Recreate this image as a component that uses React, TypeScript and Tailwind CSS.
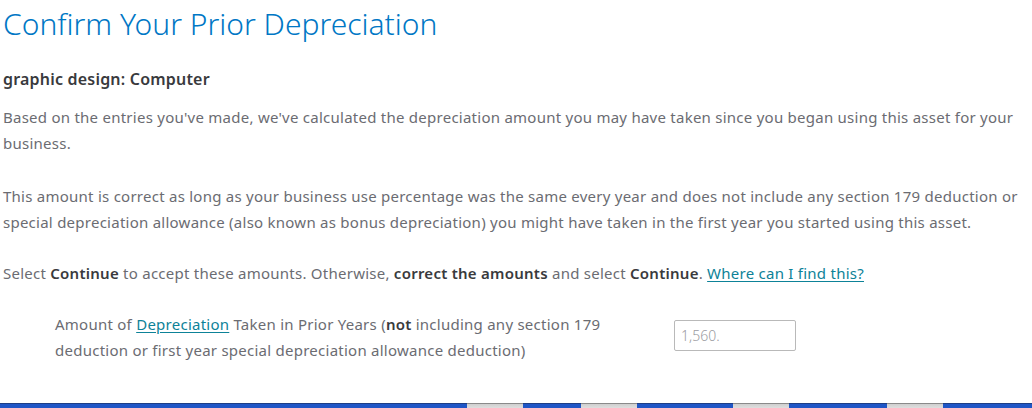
import React from "react"

const FONT = { fontFamily: '"Noto Sans", "Open Sans", Arial, sans-serif' }

// grey gaps in the blue strip along the bottom edge
const STRIP = [
  { w: 467, grey: false },
  { w: 56, grey: true },
  { w: 58, grey: false },
  { w: 56, grey: true },
  { w: 96, grey: false },
  { w: 56, grey: true },
  { w: 98, grey: false },
  { w: 56, grey: true },
  { w: 89, grey: false },
]

function Strip() {
  return (
    <div className="flex h-[5px] w-full">
      {STRIP.map((s, i) => (
        <div
          key={i}
          className={
            s.grey
              ? "h-full shrink-0 border-t border-[#8a8a8a] bg-gradient-to-b from-[#cfcfcf] to-[#dedede]"
              : "h-full shrink-0 border-t border-[#1d3f86] bg-[#1f56c6]"
          }
          style={{ width: s.w }}
        />
      ))}
    </div>
  )
}

export default function App() {
  return (
    <div className="flex h-[408px] w-[1032px] flex-col bg-white" style={FONT}>
      <div className="flex-1 pl-[3px] pr-[10px]">
        <h1 className="mt-[4px] text-[30px] font-light leading-[40px] text-[#0077c5]">
          Confirm Your Prior Depreciation
        </h1>
        <h2 className="mt-[25px] text-[16px] font-semibold leading-[20px] tracking-[0.2px] text-[#393a3d]">
          graphic design: Computer
        </h2>
        <div className="mt-[15px] text-[15px] leading-[26px] tracking-[0.25px] text-[#6b6c72]">
          <p>
            Based on the entries you've made, we've calculated the depreciation amount you may have
            taken since you began using this asset for your business.
          </p>
          <p className="mt-[27px]">
            This amount is correct as long as your business use percentage was the same every year
            and does not include any section 179 deduction or special depreciation allowance (also
            known as bonus depreciation) you might have taken in the first year you started using
            this asset.
          </p>
          <p className="mt-[25px]">
            Select <b className="font-semibold text-[#393a3d]">Continue</b> to accept these amounts.
            Otherwise, <b className="font-semibold text-[#393a3d]">correct the amounts</b> and
            select <b className="font-semibold text-[#393a3d]">Continue</b>.{" "}
            <a className="text-[#0d8298] underline underline-offset-2">Where can I find this?</a>
          </p>
        </div>
        <div className="mt-[25px] flex items-center pl-[52px]">
          <p className="w-[580px] text-[15px] leading-[26px] tracking-[0.25px] text-[#6b6c72]">
            Amount of <a className="text-[#0d8298] underline underline-offset-2">Depreciation</a>{" "}
            Taken in Prior Years (<b className="font-semibold text-[#393a3d]">not</b> including any
            section 179 deduction or first year special depreciation allowance deduction)
          </p>
          <input
            readOnly
            value="1,560."
            className="mb-[3px] ml-[39px] h-[31px] w-[122px] rounded-[2px] border border-[#b9b9b9] px-[6px] text-[14px] font-light text-[#9a9ba0] outline-none"
          />
        </div>
      </div>
      <Strip />
    </div>
  )
}
